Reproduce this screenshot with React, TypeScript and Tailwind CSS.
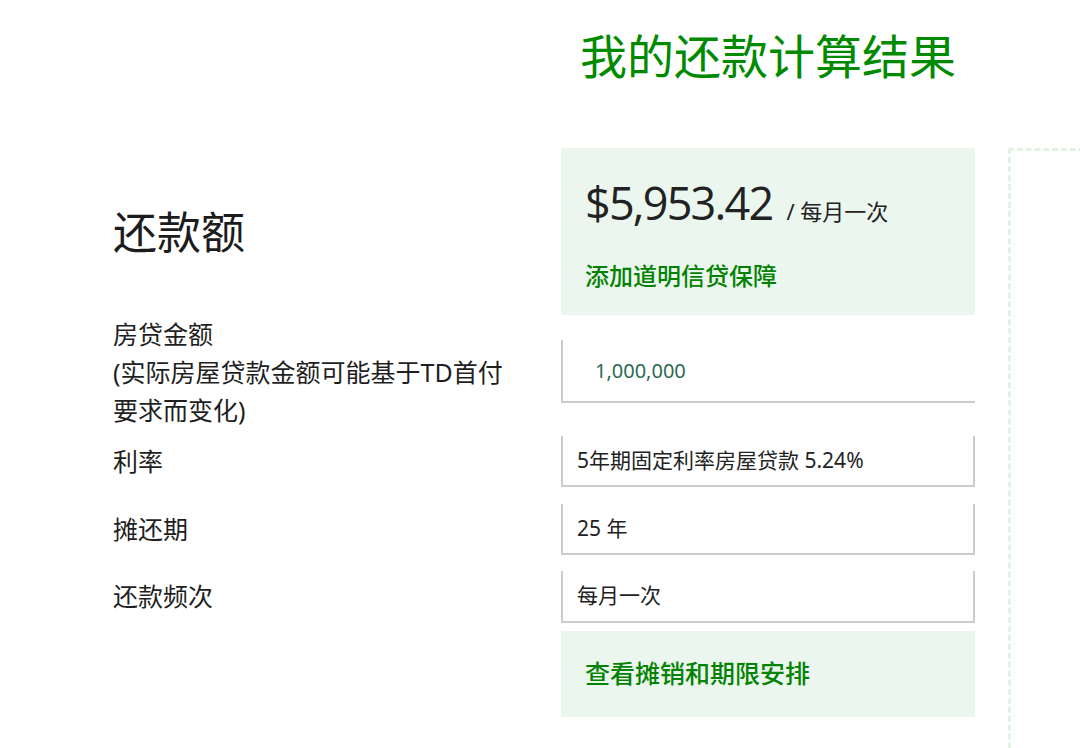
const font = "font-['Noto_Sans','Noto_Sans_CJK_SC',sans-serif]";

function Field({ children, open = false, pad = "pl-[14px]", h = "h-[51px]", text = "text-[21px] text-[#222]" }: { children: React.ReactNode; open?: boolean; pad?: string; h?: string; text?: string }) {
  return (
    <div className={`flex ${h} w-[414px] items-center border-b-2 border-l-2 border-[#cccccc] ${open ? "" : "border-r-2"} ${pad} ${text}`}>
      {children}
    </div>
  );
}

export default function App() {
  return (
    <div className={`h-[748px] w-[1080px] overflow-hidden bg-white ${font}`}>
      <div className="flex pl-[113px]">
        <div className="w-[862px] shrink-0">
          <div className="flex h-[148px] pt-[28px]">
            <div className="w-[448px] shrink-0" />
            <h1 className="w-[414px] text-center text-[47px] leading-[56px] text-[#008a00]">我的还款计算结果</h1>
          </div>

          <div className="flex items-center">
            <div className="w-[448px] shrink-0 text-[44px] leading-none text-[#1c1c1c]">还款额</div>
            <div className="h-[167px] w-[414px] bg-[#ebf7ee] pl-[24px] pt-[32px]">
              <div className="flex items-baseline text-[#222]">
                <span className="font-['Open_Sans',sans-serif] text-[45px] leading-none tracking-[-0.04em]">$5,953.42</span>
                <span className="ml-[14px] text-[22px]">/ 每月一次</span>
              </div>
              <div className="mt-[33px] text-[24px] font-medium leading-[29px] text-[#038203]">添加道明信贷保障</div>
            </div>
          </div>

          <div className="flex">
            <div className="w-[448px] shrink-0 text-[25px] leading-[38px] text-[#1f1f1f]">
              房贷金额
              <br />
              (实际房屋贷款金额可能基于TD首付
              <br />
              要求而变化)
            </div>
            <div className="pt-[25px]">
              <Field open pad="pl-[32px]" h="h-[63px]" text="text-[20px] text-[#2d6a52]">
                1,000,000
              </Field>
            </div>
          </div>

          <div className="mt-[7px] flex items-center">
            <div className="w-[448px] shrink-0 text-[25px] text-[#1f1f1f]">利率</div>
            <Field>5年期固定利率房屋贷款 5.24%</Field>
          </div>

          <div className="mt-[17px] flex items-center">
            <div className="w-[448px] shrink-0 text-[25px] text-[#1f1f1f]">摊还期</div>
            <Field>25 年</Field>
          </div>

          <div className="mt-[16px] flex items-center">
            <div className="w-[448px] shrink-0 text-[25px] text-[#1f1f1f]">还款频次</div>
            <Field h="h-[52px]">每月一次</Field>
          </div>

          <div className="mt-[8px] flex">
            <div className="w-[448px] shrink-0" />
            <div className="flex h-[86px] w-[414px] items-center bg-[#ebf7ee] pl-[24px] text-[25px] font-medium text-[#038203]">
              查看摊销和期限安排
            </div>
          </div>
        </div>

        <div className="ml-[33px] mt-[148px] h-[700px] w-[200px] shrink-0 border-l-[3px] border-t-[3px] border-dashed border-[#e0f3e5]" />
      </div>
    </div>
  );
}
